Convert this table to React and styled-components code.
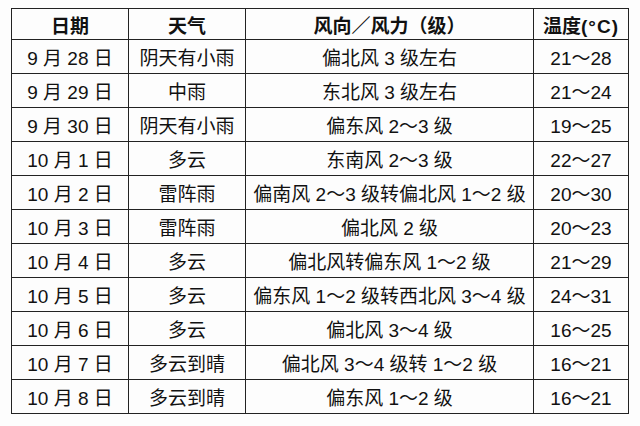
import styled, { createGlobalStyle } from "styled-components";

const GlobalStyle = createGlobalStyle`
  html, body {
    margin: 0;
    padding: 0;
    background: #fdfdfd;
  }
`;

const Page = styled.div`
  width: 640px;
  height: 426px;
  padding: 8px 0 0 11px;
  box-sizing: border-box;
  font-family: "Liberation Sans", "Noto Sans CJK SC", sans-serif;
  color: #111;
`;

const Table = styled.table`
  border-collapse: collapse;
  table-layout: fixed;
  width: 617px;
`;

const Col = styled.col`
  width: ${(p) => p.$w}px;
`;

const HeadCell = styled.th`
  border: 1.5px solid #222;
  height: 30px;
  padding: 0;
  font-size: 19px;
  font-weight: 700;
  text-align: center;
  vertical-align: middle;
  white-space: nowrap;
`;

const Unit = styled.span`
  letter-spacing: 1px;
`;

const Cell = styled.td`
  border: 1.5px solid #222;
  height: 33px;
  padding: 0;
  font-size: 19px;
  font-weight: 400;
  text-align: center;
  vertical-align: middle;
  white-space: nowrap;
`;

const rows = [
  ["9 月 28 日", "阴天有小雨", "偏北风 3 级左右", "21～28"],
  ["9 月 29 日", "中雨", "东北风 3 级左右", "21～24"],
  ["9 月 30 日", "阴天有小雨", "偏东风 2～3 级", "19～25"],
  ["10 月 1 日", "多云", "东南风 2～3 级", "22～27"],
  ["10 月 2 日", "雷阵雨", "偏南风 2～3 级转偏北风 1～2 级", "20～30"],
  ["10 月 3 日", "雷阵雨", "偏北风 2 级", "20～23"],
  ["10 月 4 日", "多云", "偏北风转偏东风 1～2 级", "21～29"],
  ["10 月 5 日", "多云", "偏东风 1～2 级转西北风 3～4 级", "24～31"],
  ["10 月 6 日", "多云", "偏北风 3～4 级", "16～25"],
  ["10 月 7 日", "多云到晴", "偏北风 3～4 级转 1～2 级", "16～21"],
  ["10 月 8 日", "多云到晴", "偏东风 1～2 级", "16～21"],
];

export default function App() {
  return (
    <>
      <GlobalStyle />
      <Page>
        <Table>
          <colgroup>
            <Col $w={117} />
            <Col $w={117} />
            <Col $w={288} />
            <Col $w={95} />
          </colgroup>
          <thead>
            <tr>
              <HeadCell>日期</HeadCell>
              <HeadCell>天气</HeadCell>
              <HeadCell>风向／风力（级）</HeadCell>
              <HeadCell>
                温度<Unit>(°C)</Unit>
              </HeadCell>
            </tr>
          </thead>
          <tbody>
            {rows.map((r) => (
              <tr key={r[0]}>
                {r.map((v, i) => (
                  <Cell key={i}>{v}</Cell>
                ))}
              </tr>
            ))}
          </tbody>
        </Table>
      </Page>
    </>
  );
}
